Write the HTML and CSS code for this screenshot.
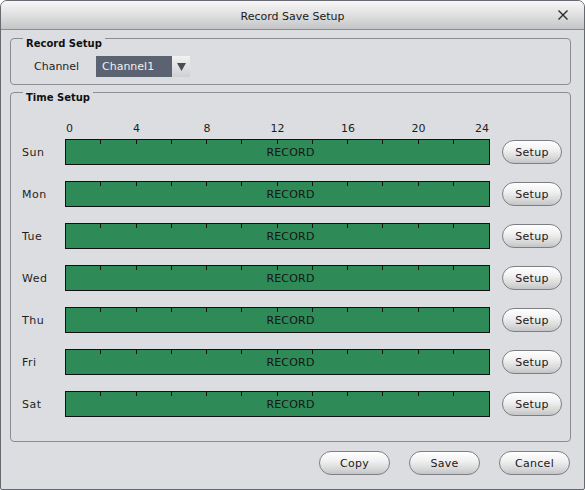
FILE: index.html
```html
<!DOCTYPE html>
<html>
<head>
<meta charset="utf-8">
<link rel="stylesheet" href="styles.css">
</head>
<body>
<div class="window">
  <div class="titlebar">
    <span class="title">Record Save Setup</span>
    <svg class="close" width="12" height="12" viewBox="0 0 12 12"><path d="M1.5 1.5 L10.5 10.5 M10.5 1.5 L1.5 10.5" stroke="#2b2b2b" stroke-width="1.4" fill="none"/></svg>
  </div>
  <div class="content">
    <div class="group group-record">
      <div class="legend">Record Setup</div>
      <div class="channel-row">
        <span class="channel-label">Channel</span>
        <div class="select">
          <span class="sel-value">Channel1</span>
          <span class="sel-arrow"><svg width="9" height="8" viewBox="0 0 9 8"><path d="M0 0 H9 L4.5 8 Z" fill="#4a4d55"/></svg></span>
        </div>
      </div>
    </div>
    <div class="group group-time">
      <div class="legend">Time Setup</div>
      <div class="schedule">
        <div class="hours">
          <span class="h first"><span>0</span></span>
          <span class="h"><span>4</span></span>
          <span class="h"><span>8</span></span>
          <span class="h"><span>12</span></span>
          <span class="h"><span>16</span></span>
          <span class="h"><span>20</span></span>
          <span class="h last"><span>24</span></span>
        </div>

        <span class="day">Sun</span>
        <div class="bar"><div class="ticks"><i></i><i></i><i></i><i></i><i></i><i></i><i></i><i></i><i></i><i></i><i></i><i></i></div><span class="rec">RECORD</span></div>
        <button class="pill setup">Setup</button>

        <span class="day">Mon</span>
        <div class="bar"><div class="ticks"><i></i><i></i><i></i><i></i><i></i><i></i><i></i><i></i><i></i><i></i><i></i><i></i></div><span class="rec">RECORD</span></div>
        <button class="pill setup">Setup</button>

        <span class="day">Tue</span>
        <div class="bar"><div class="ticks"><i></i><i></i><i></i><i></i><i></i><i></i><i></i><i></i><i></i><i></i><i></i><i></i></div><span class="rec">RECORD</span></div>
        <button class="pill setup">Setup</button>

        <span class="day">Wed</span>
        <div class="bar"><div class="ticks"><i></i><i></i><i></i><i></i><i></i><i></i><i></i><i></i><i></i><i></i><i></i><i></i></div><span class="rec">RECORD</span></div>
        <button class="pill setup">Setup</button>

        <span class="day">Thu</span>
        <div class="bar"><div class="ticks"><i></i><i></i><i></i><i></i><i></i><i></i><i></i><i></i><i></i><i></i><i></i><i></i></div><span class="rec">RECORD</span></div>
        <button class="pill setup">Setup</button>

        <span class="day">Fri</span>
        <div class="bar"><div class="ticks"><i></i><i></i><i></i><i></i><i></i><i></i><i></i><i></i><i></i><i></i><i></i><i></i></div><span class="rec">RECORD</span></div>
        <button class="pill setup">Setup</button>

        <span class="day">Sat</span>
        <div class="bar"><div class="ticks"><i></i><i></i><i></i><i></i><i></i><i></i><i></i><i></i><i></i><i></i><i></i><i></i></div><span class="rec">RECORD</span></div>
        <button class="pill setup">Setup</button>
      </div>
    </div>
    <div class="footer">
      <button class="pill action">Copy</button>
      <button class="pill action">Save</button>
      <button class="pill action">Cancel</button>
    </div>
  </div>
</div>
</body>
</html>
```

FILE: styles.css
```css
html, body {
  margin: 0;
  padding: 0;
  background: #ffffff;
}

body {
  font-family: "DejaVu Sans", "Liberation Sans", sans-serif;
  font-size: 11px;
  color: #1e1e1e;
}

.window {
  box-sizing: border-box;
  width: 585px;
  height: 490px;
  border: 1px solid #66696f;
  border-radius: 7px 7px 2px 2px;
  background: #dcdde1;
  display: flex;
  flex-direction: column;
  overflow: hidden;
}

.titlebar {
  box-sizing: border-box;
  height: 29px;
  border-bottom: 1px solid #8b8d92;
  background: linear-gradient(#f7f7f7, #e2e2e2 45%, #c4c5c7);
  display: flex;
  align-items: center;
  justify-content: center;
  padding-top: 2px;
  position: relative;
}

.title {
  font-size: 11px;
  color: #1a1a1a;
}

.close {
  position: absolute;
  right: 15px;
  top: 8px;
}

.content {
  flex: 1;
  display: flex;
  flex-direction: column;
  padding: 8px 13px 0 9px;
}

.group {
  border: 1px solid #8b8d92;
  border-radius: 4px;
}

.legend {
  align-self: flex-start;
  font-weight: bold;
  font-size: 10px;
  line-height: 13px;
  background: #dcdde1;
  margin: -2px 0 0 12px;
  padding: 0 3px;
  color: #111;
}

.group-record {
  display: flex;
  flex-direction: column;
  padding-bottom: 7px;
}

.channel-row {
  display: flex;
  align-items: center;
  margin-top: 6px;
  padding-left: 23px;
  height: 21px;
}

.channel-label {
  width: 62px;
  color: #1e1e1e;
}

.select {
  display: flex;
  height: 21px;
}

.sel-value {
  width: 70px;
  padding-left: 6px;
  background: #5b6272;
  color: #f0f0f0;
  display: flex;
  align-items: center;
}

.sel-arrow {
  width: 18px;
  background: linear-gradient(#f2f2f2, #cfd0d3);
  display: flex;
  align-items: center;
  justify-content: center;
}

.group-time {
  margin-top: 7px;
  display: flex;
  flex-direction: column;
  padding-bottom: 24px;
}

.schedule {
  display: grid;
  grid-template-columns: 42px 425px 60px;
  column-gap: 12px;
  row-gap: 16px;
  align-items: center;
  margin-top: 16px;
}

.hours {
  grid-column: 2;
  display: flex;
  justify-content: space-between;
  line-height: 13px;
  height: 13px;
  margin-top: 2px;
  margin-bottom: -12px;
  padding: 0 1px;
}

.h {
  width: 0;
  display: flex;
  justify-content: center;
  white-space: nowrap;
}

.h.first {
  justify-content: flex-start;
}

.h.last {
  justify-content: flex-end;
}

.day {
  grid-column: 1;
  padding-left: 11px;
  color: #1e1e1e;
  letter-spacing: 0.5px;
}

.bar {
  grid-column: 2;
  box-sizing: border-box;
  height: 26px;
  border: 1px solid #111;
  background: #2e8a57;
  display: grid;
}

.ticks {
  grid-area: 1 / 1;
  display: flex;
}

.ticks i {
  flex: 1;
  background: linear-gradient(#111, #111) right top / 1px 4px no-repeat;
}

.ticks i:last-child {
  background: none;
}

.rec {
  grid-area: 1 / 1;
  display: flex;
  align-items: center;
  justify-content: center;
  padding-left: 26px;
  color: #151515;
  letter-spacing: 0.2px;
}

.pill {
  font-family: "DejaVu Sans", "Liberation Sans", sans-serif;
  font-size: 11px;
  color: #1a1a1a;
  border: 1px solid #7d7f84;
  border-radius: 12px;
  background: linear-gradient(#ffffff, #f1f1f1 40%, #d9d9da 75%, #c4c5c7);
  padding: 0;
  letter-spacing: 0.3px;
}

.setup {
  grid-column: 3;
  width: 60px;
  height: 24px;
}

.footer {
  display: flex;
  justify-content: flex-end;
  gap: 19px;
  margin-top: 9px;
  padding-right: 1px;
}

.action {
  width: 71px;
  height: 24px;
}
```
